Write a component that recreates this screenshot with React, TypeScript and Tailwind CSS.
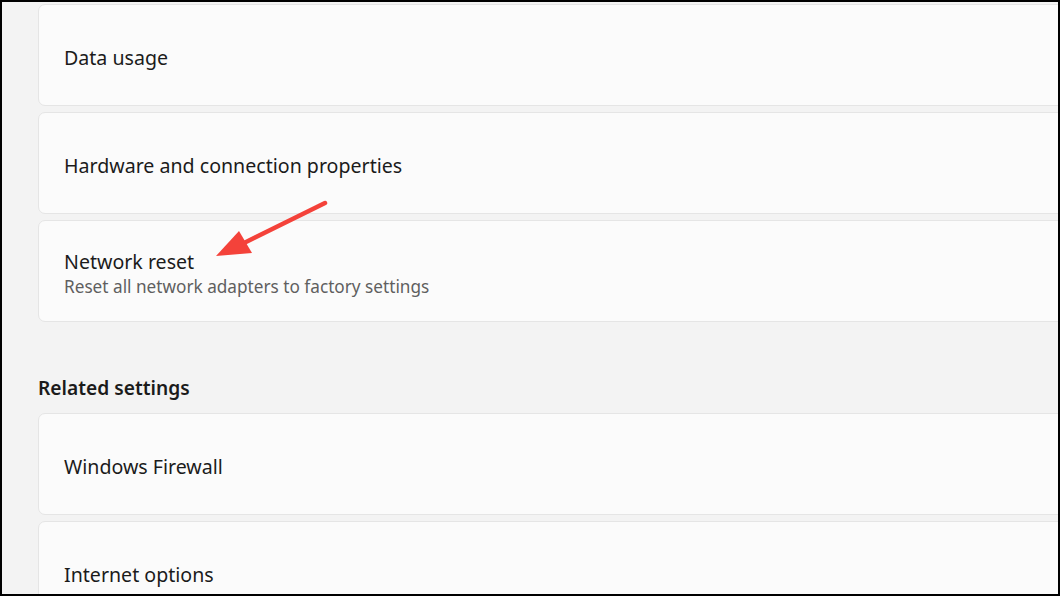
export default function App() {
  return (
    <div
      className="relative h-[596px] w-[1060px] overflow-hidden border-2 border-black bg-[#f3f3f3] text-[#1b1b1b]"
      style={{ fontFamily: '"Noto Sans", "Open Sans", sans-serif' }}
    >
      <div className="flex flex-col pl-[36px] pt-[2px]">
        {/* top group */}
        <div className="flex flex-col gap-[6px]">
          <SettingCard title="Data usage" />
          <SettingCard title="Hardware and connection properties" />
          <SettingCard
            title="Network reset"
            subtitle="Reset all network adapters to factory settings"
          />
        </div>

        <h2 className="mt-[52px] mb-[11px] h-[28px] text-[19.2px] leading-[28px] font-semibold">
          Related settings
        </h2>

        <div className="flex flex-col gap-[6px]">
          <SettingCard title="Windows Firewall" />
          <SettingCard title="Internet options" />
        </div>
      </div>

      {/* annotation arrow */}
      <svg
        className="pointer-events-none absolute left-[-2px] top-[-2px]"
        width="1060"
        height="596"
        viewBox="0 0 1060 596"
      >
        <line
          x1="325"
          y1="203"
          x2="244"
          y2="243"
          stroke="#f4423a"
          strokeWidth="4.5"
          strokeLinecap="round"
        />
        <polygon points="216,256 239,231 252,253" fill="#f4423a" />
      </svg>
    </div>
  );
}

function SettingCard({ title, subtitle }: { title: string; subtitle?: string }) {
  return (
    <div className="-mr-6 flex h-[102px] flex-col justify-center rounded-[7px] border border-[#e5e5e5] bg-[#fbfbfb] pl-[25px] pt-[5px]">
      <div className="text-[19.6px] leading-[26px]">{title}</div>
      {subtitle && (
        <div className="text-[17.2px] leading-[23px] text-[#5f5f5f]">{subtitle}</div>
      )}
    </div>
  );
}
